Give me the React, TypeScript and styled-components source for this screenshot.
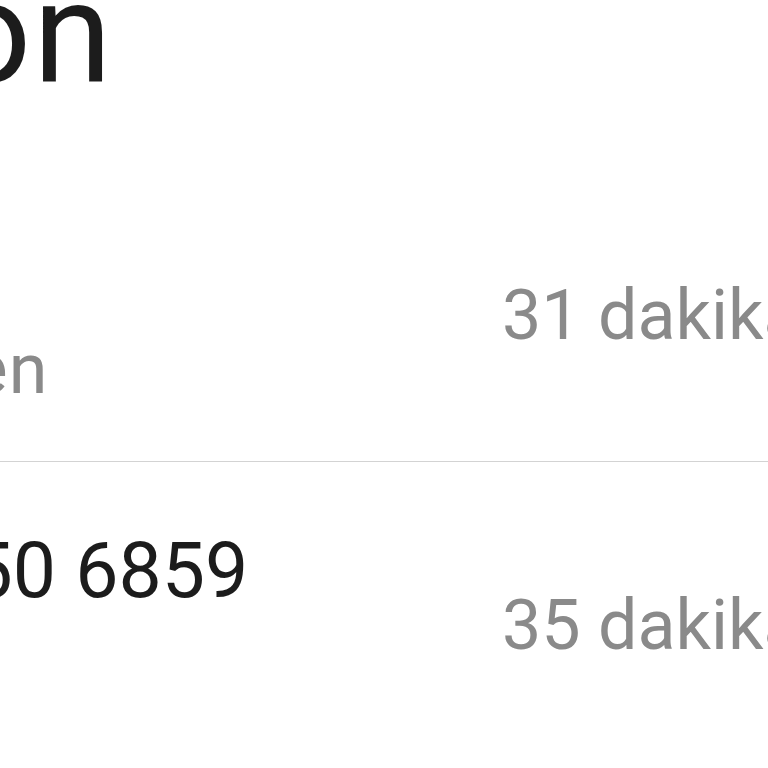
import styled, { createGlobalStyle } from "styled-components";

const GlobalStyle = createGlobalStyle`
  html, body {
    margin: 0;
    padding: 0;
    background: #ffffff;
    overflow: hidden;
  }
  body {
    font-family: Roboto, "Noto Sans", sans-serif;
  }
`;

const Screen = styled.div`
  width: 1500px;
  margin-left: -372px;
  color: #1f1f1f;
`;

const Title = styled.h1`
  margin: -37px 0 47px;
  font-size: 142px;
  line-height: 142px;
  font-weight: 400;
  letter-spacing: 2px;
  color: #1c1c1c;
  white-space: nowrap;
`;

const CallList = styled.div`
  display: flex;
  flex-direction: column;
`;

const CallRow = styled.div<{ $divider?: boolean }>`
  display: grid;
  grid-template-columns: 874px 1fr;
  align-items: center;
  padding: 63px 0 46px;
  border-bottom: ${(p) => (p.$divider ? "1.5px solid #d3d3d3" : "none")};
`;

const Info = styled.div`
  display: flex;
  flex-direction: column;
`;

const Name = styled.span`
  font-size: 77px;
  line-height: 92px;
  color: #1c1c1c;
  white-space: nowrap;
`;

const Sub = styled.span`
  margin-top: 16px;
  font-size: 70px;
  line-height: 92px;
  letter-spacing: 1.2px;
  color: #8a8a8a;
  white-space: nowrap;
`;

const Duration = styled.span`
  font-size: 70px;
  line-height: 92px;
  color: #8a8a8a;
  white-space: nowrap;
`;

const calls = [
  { name: "Annem", type: "Mobil · Gelen", duration: "31 dakika" },
  { name: "+90 532 450 6859", type: "Mobil", duration: "35 dakika" },
];

export default function App() {
  return (
    <>
      <GlobalStyle />
      <Screen>
        <Title>Telefon</Title>
        <CallList>
          {calls.map((c, i) => (
            <CallRow key={c.name} $divider={i < calls.length - 1}>
              <Info>
                <Name>{c.name}</Name>
                <Sub>{c.type}</Sub>
              </Info>
              <Duration>{c.duration}</Duration>
            </CallRow>
          ))}
        </CallList>
      </Screen>
    </>
  );
}
